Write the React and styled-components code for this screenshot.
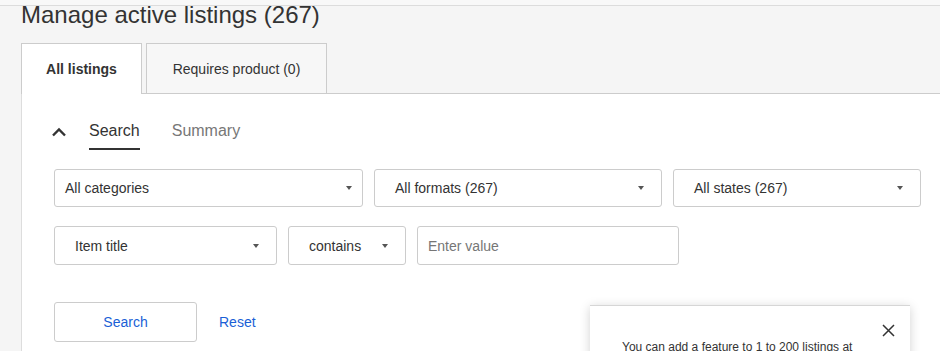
import styled, { createGlobalStyle } from 'styled-components'

const GlobalStyle = createGlobalStyle`
    body {
        margin: 0;
        background: #f5f5f5;
        font-family: "Liberation Sans", Arial, sans-serif;
        color: #333;
        overflow: hidden;
    }
`;

const TopStrip = styled.div`
    height: 5px;
    background: #f8f8f8;
    border-bottom: 1px solid #dcdcdc;
`;

const Page = styled.div`
    padding-left: 21px;
`;

const Title = styled.h1`
    margin: -3px 0 0;
    font-size: 24px;
    line-height: 24px;
    font-weight: 400;
    color: #333;
`;

const TabBar = styled.div`
    display: flex;
    gap: 4px;
    margin-top: 16px;
    border-bottom: 1px solid #ccc;
`;

const Tab = styled.div`
    width: ${p => p.$width}px;
    box-sizing: border-box;
    display: flex;
    align-items: center;
    justify-content: center;
    font-size: 14px;
    font-weight: ${p => (p.$active ? 700 : 400)};
    color: #333;
    border: 1px solid #ccc;
    border-bottom: none;
    background: ${p => (p.$active ? '#fff' : '#f7f7f7')};
    margin-bottom: ${p => (p.$active ? '-1px' : '0')};
    height: ${p => (p.$active ? '51px' : '50px')};
`;

const Panel = styled.div`
    position: relative;
    background: #fff;
    border-left: 1px solid #ddd;
    height: 260px;
    padding: 27px 0 0 32px;
`;

const SubNav = styled.div`
    display: flex;
    align-items: flex-start;
`;

const Chevron = styled.svg`
    width: 16px;
    height: 10px;
    margin: 6px 22px 0 -3px;
`;

const SubTab = styled.div`
    font-size: 16px;
    line-height: 20px;
    padding-bottom: 7px;
    margin-right: 32px;
    color: ${p => (p.$active ? '#333' : '#777')};
    border-bottom: 2px solid ${p => (p.$active ? '#333' : 'transparent')};
`;

const Row = styled.div`
    display: flex;
    gap: 11px;
    margin-top: ${p => p.$top}px;
`;

const Select = styled.div`
    width: ${p => p.$width}px;
    height: ${p => p.$height || 38}px;
    box-sizing: border-box;
    border: 1px solid #ccc;
    border-radius: 3px;
    display: flex;
    align-items: center;
    justify-content: space-between;
    padding: 0 ${p => (p.$compact ? 10 : 17)}px 0 ${p => (p.$compact ? 10 : 20)}px;
    font-size: 14px;
    color: #333;
    background: #fff;
`;

const Caret = styled.span`
    width: 0;
    height: 0;
    border-left: 3.5px solid transparent;
    border-right: 3.5px solid transparent;
    border-top: 4px solid #555;
`;

const Input = styled.input`
    width: ${p => p.$width}px;
    height: 39px;
    box-sizing: border-box;
    border: 1px solid #ccc;
    border-radius: 3px;
    padding: 0 10px;
    font-family: inherit;
    font-size: 14px;
    color: #333;
    outline: none;
    &::placeholder {
        color: #767676;
    }
`;

const Actions = styled.div`
    display: flex;
    align-items: center;
    gap: 22px;
    margin-top: 37px;
`;

const Button = styled.button`
    width: 143px;
    height: 40px;
    border: 1px solid #ccc;
    border-radius: 3px;
    background: #fff;
    color: #1a5fd6;
    font-family: inherit;
    font-size: 14px;
    cursor: pointer;
`;

const Link = styled.a`
    color: #1a5fd6;
    font-size: 14px;
    text-decoration: none;
    cursor: pointer;
`;

const Popup = styled.div`
    position: absolute;
    left: 568px;
    top: 211px;
    width: 320px;
    height: 80px;
    box-sizing: border-box;
    background: #fff;
    border-top: 1px solid #d6d6d6;
    box-shadow: 0 2px 10px rgba(0, 0, 0, 0.18);
    padding: 34px 16px 0 32px;
    font-size: 12px;
    color: #333;
`;

const Close = styled.svg`
    position: absolute;
    right: 15px;
    top: 18px;
    width: 13px;
    height: 13px;
`;

const App = () => {
  return (
    <>
      <GlobalStyle />
      <TopStrip />
      <Page>
        <Title>Manage active listings (267)</Title>
        <TabBar>
          <Tab $active $width={121}>All listings</Tab>
          <Tab $width={181}>Requires product (0)</Tab>
        </TabBar>
        <Panel>
          <SubNav>
            <Chevron viewBox="0 0 16 10">
              <path d="M2 8.5 L8 2.5 L14 8.5" fill="none" stroke="#333" strokeWidth="2.4" />
            </Chevron>
            <SubTab $active>Search</SubTab>
            <SubTab>Summary</SubTab>
          </SubNav>
          <Row $top={19}>
            <Select $compact $width={309}>All categories<Caret /></Select>
            <Select $width={288}>All formats (267)<Caret /></Select>
            <Select $width={248}>All states (267)<Caret /></Select>
          </Row>
          <Row $top={19}>
            <Select $width={223} $height={39}>Item title<Caret /></Select>
            <Select $width={118} $height={39}>contains<Caret /></Select>
            <Input $width={262} placeholder="Enter value" />
          </Row>
          <Actions>
            <Button>Search</Button>
            <Link>Reset</Link>
          </Actions>
          <Popup>
            <Close viewBox="0 0 13 13">
              <path d="M1 1 L12 12 M12 1 L1 12" stroke="#333" strokeWidth="1.5" />
            </Close>
            You can add a feature to 1 to 200 listings at
          </Popup>
        </Panel>
      </Page>
    </>
  )
}

export default App
